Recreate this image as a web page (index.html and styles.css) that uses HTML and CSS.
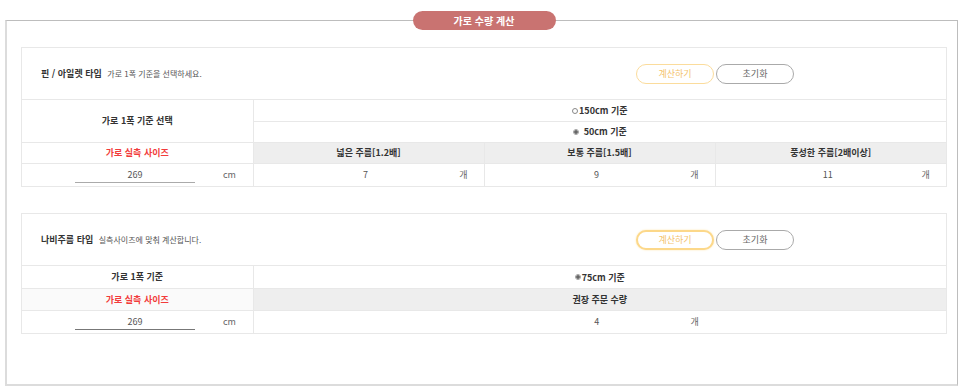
FILE: index.html
```html
<!DOCTYPE html>
<html lang="ko">
<head>
    <meta charset="UTF-8">
    <meta name="viewport" content="width=device-width, initial-scale=1.0">
    <title>가로 수량 계산</title>
    <link rel="stylesheet" href="styles.css">
</head>
<body>
    <div class="calc_box">
        <div class="calc_title">가로 수량 계산</div>

        <div class="calc_section">
            <div class="calc_head">
                <div class="calc_name">
                    <strong>핀 / 아일렛 타입</strong>
                    <span>가로 1폭 기준을 선택하세요.</span>
                </div>
                <div class="calc_btns">
                    <button class="btn_calc">계산하기</button>
                    <button class="btn_reset">초기화</button>
                </div>
            </div>
            <table class="calc_table">
                <colgroup>
                    <col class="col_label">
                    <col>
                    <col>
                    <col>
                </colgroup>
                <tr>
                    <th rowspan="2">가로 1폭 기준 선택</th>
                    <td colspan="3" class="radio_cell">
                        <label><input type="radio" name="pin_width">150cm 기준</label>
                    </td>
                </tr>
                <tr>
                    <td colspan="3" class="radio_cell">
                        <label class="spaced"><input type="radio" name="pin_width" checked>50cm 기준</label>
                    </td>
                </tr>
                <tr>
                    <th class="red">가로 실측 사이즈</th>
                    <th class="gray">넓은 주름[1.2배]</th>
                    <th class="gray">보통 주름[1.5배]</th>
                    <th class="gray">풍성한 주름[2배이상]</th>
                </tr>
                <tr class="value_row">
                    <td>
                        <div class="size_field">
                            <input type="text" value="269">
                            <span>cm</span>
                        </div>
                    </td>
                    <td><div class="result"><input type="text" value="7" readonly><span>개</span></div></td>
                    <td><div class="result"><input type="text" value="9" readonly><span>개</span></div></td>
                    <td><div class="result"><input type="text" value="11" readonly><span>개</span></div></td>
                </tr>
            </table>
        </div>

        <div class="calc_section">
            <div class="calc_head">
                <div class="calc_name">
                    <strong>나비주름 타입</strong>
                    <span>실측사이즈에 맞춰 계산합니다.</span>
                </div>
                <div class="calc_btns">
                    <button class="btn_calc focus">계산하기</button>
                    <button class="btn_reset">초기화</button>
                </div>
            </div>
            <table class="calc_table tall">
                <colgroup>
                    <col class="col_label">
                    <col>
                    <col>
                    <col>
                </colgroup>
                <tr>
                    <th>가로 1폭 기준</th>
                    <td colspan="3" class="radio_cell">
                        <label><input type="radio" name="bow_width" checked>75cm 기준</label>
                    </td>
                </tr>
                <tr>
                    <th class="red light">가로 실측 사이즈</th>
                    <th colspan="3" class="gray">권장 주문 수량</th>
                </tr>
                <tr class="value_row">
                    <td>
                        <div class="size_field dark">
                            <input type="text" value="269">
                            <span>cm</span>
                        </div>
                    </td>
                    <td colspan="3"><div class="result"><input type="text" value="4" readonly><span>개</span></div></td>
                </tr>
            </table>
        </div>
    </div>
</body>
</html>
```

FILE: styles.css
```css
* {
    margin: 0;
    padding: 0;
    box-sizing: border-box;
}

body {
    font-family: "Noto Sans CJK KR", "Noto Sans", sans-serif;
    font-size: 9px;
    color: #333;
    background: #fff;
    padding: 20px 8px 0 5px;
}

.calc_box {
    height: 366px;
    padding: 0 10px 0 14px;
    border: 1px solid #bdbdbd;
    border-left: 2px solid #dcdcdc;
    border-bottom: 2px solid #dcdcdc;
}

.calc_title {
    width: 143px;
    height: 19px;
    margin: -10px auto 0;
    border-radius: 10px;
    background-color: #c97371;
    color: #fff;
    font-size: 10px;
    font-weight: bold;
    line-height: 19px;
    text-align: center;
}

.calc_section {
    margin-top: 17px;
    border: 1px solid #e8e8e8;
}

.calc_section + .calc_section {
    margin-top: 26px;
}

.calc_head {
    height: 52px;
    padding: 0 152px 0 19px;
    display: flex;
    align-items: center;
    border-bottom: 1px solid #e8e8e8;
}

.calc_name {
    flex: 1;
}

.calc_name strong {
    font-size: 9px;
    color: #333;
}

.calc_name span {
    margin-left: 3px;
    font-size: 8px;
    color: #555;
}

.calc_btns {
    display: flex;
    gap: 2px;
}

.calc_btns button {
    width: 78px;
    height: 20px;
    border-radius: 10px;
    background: #fff;
    font-family: inherit;
    font-size: 9px;
    cursor: pointer;
}

.btn_calc {
    border: 1px solid #fbdc9c;
    color: #f4c46e;
}

.btn_calc.focus {
    border: 2px solid #fcd88a;
    box-shadow: 0 0 2px #fde3a8;
}

.btn_reset {
    border: 1px solid #aaa;
    color: #666;
}

.calc_table {
    width: 100%;
    border-collapse: collapse;
    border-style: hidden;
    table-layout: fixed;
}

.col_label {
    width: 231px;
}

.calc_table th,
.calc_table td {
    height: 21px;
    border: 1px solid #e8e8e8;
    text-align: center;
    font-weight: normal;
}

.calc_table.tall th,
.calc_table.tall td {
    height: 22px;
}

.calc_table th {
    font-weight: bold;
    color: #333;
}

.calc_table th.red {
    color: #f23b3b;
    font-weight: 600;
}

.calc_table th.light {
    background-color: #fafafa;
}

.calc_table th.gray {
    background-color: #eeeeee;
}

.radio_cell label {
    display: inline-flex;
    align-items: center;
    gap: 1px;
    font-weight: 600;
    color: #333;
}

.radio_cell label.spaced {
    gap: 5px;
}

.radio_cell input {
    appearance: none;
    width: 6px;
    height: 6px;
    border: 1px solid #888;
    border-radius: 50%;
    background: #fff;
}

.radio_cell input:checked {
    border-color: #aaa;
    background: radial-gradient(circle, #666 0 1.5px, #ccc 2px);
}

.calc_table .value_row td {
    height: 23px;
}

.size_field {
    display: flex;
    align-items: center;
    padding-left: 53px;
}

.size_field input {
    width: 120px;
    height: 17px;
    border: none;
    border-bottom: 1px solid #aaa;
    text-align: center;
    font-family: inherit;
    font-size: 9px;
    color: #555;
    outline: none;
}

.size_field.dark input {
    border-bottom-color: #777;
}

.size_field span {
    margin-left: 28px;
    color: #666;
}

.result {
    display: flex;
    justify-content: center;
    align-items: center;
    padding-left: 6px;
}

.result input {
    width: 184px;
    border: none;
    background: transparent;
    text-align: center;
    font-family: inherit;
    font-size: 9px;
    color: #555;
    outline: none;
}

.result span {
    width: 12px;
    color: #666;
}
```
